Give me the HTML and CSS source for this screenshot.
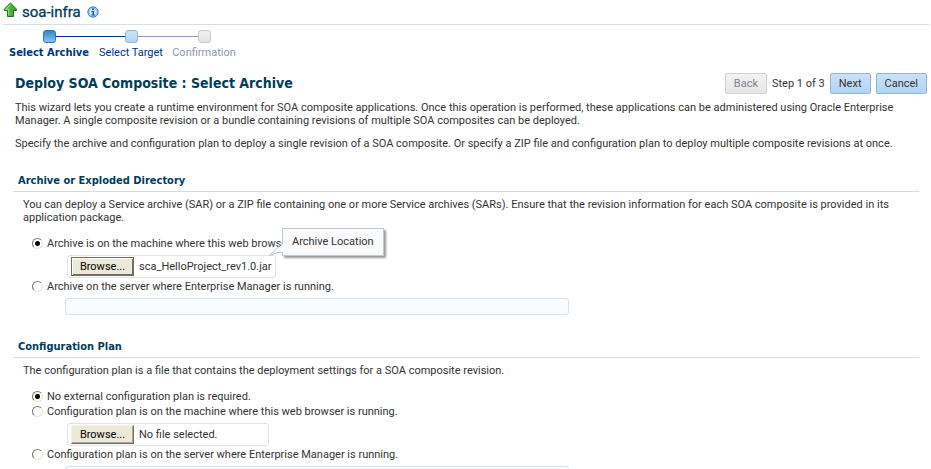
FILE: index.html
```
<!DOCTYPE html>
<html lang="en">
<head>
    <meta charset="UTF-8">
    <meta name="viewport" content="width=device-width, initial-scale=1.0">
    <title>Deploy SOA Composite</title>
    <link rel="stylesheet" href="styles.css">
</head>
<body>

<header class="target-header">
    <svg class="up-icon" width="14" height="16" viewBox="0 0 14 16" aria-hidden="true">
        <defs>
            <linearGradient id="up-fill" x1="0" y1="0" x2="1" y2="0">
                <stop offset="0" stop-color="#6fd455"/>
                <stop offset="1" stop-color="#2c9a25"/>
            </linearGradient>
        </defs>
        <path d="M7.5 1 L13.4 7 V8.5 H10.5 V14.5 H4.5 V8.5 H1.3 V7 Z" fill="url(#up-fill)" stroke="#1d761b" stroke-linejoin="round"/>
        <path d="M7.5 2.6 L3 7.3 H5.7 V13" fill="none" stroke="#a5e893" stroke-width="0.8"/>
    </svg>
    <span class="target-name">soa-infra</span>
    <svg class="info-icon" width="12" height="12" viewBox="0 0 12 12" aria-hidden="true">
        <circle cx="6" cy="6" r="5.2" fill="#8fc0f2" stroke="#3f7fd0"/>
        <circle cx="6" cy="6" r="3.6" fill="#cfe4fb"/>
        <path d="M5 2.5h2v1.5H5z M4.5 5H7v3.5h1v1H4.5v-1h1V6h-1z" fill="#1657b0"/>
    </svg>
</header>

<nav>
    <ol class="train">
        <li class="stop current"><span class="track"><span class="marker"></span></span>Select Archive</li>
        <li class="stop next"><span class="track"><span class="marker"></span></span>Select Target</li>
        <li class="stop last"><span class="track"><span class="marker"></span></span>Confirmation</li>
    </ol>
</nav>

<main>
    <div class="title-row">
        <h1>Deploy SOA Composite : Select Archive</h1>
        <div class="actions">
            <button type="button" disabled>Back</button>
            <span class="step-count">Step 1 of 3</span>
            <button type="button">Next</button>
            <button type="button">Cancel</button>
        </div>
    </div>

    <div class="intro">
        <p>This wizard lets you create a runtime environment for SOA composite applications. Once this operation is performed, these applications can be administered using Oracle Enterprise Manager. A single composite revision or a bundle containing revisions of multiple SOA composites can be deployed.</p>
        <p>Specify the archive and configuration plan to deploy a single revision of a SOA composite. Or specify a ZIP file and configuration plan to deploy multiple composite revisions at once.</p>
    </div>

    <section>
        <h2>Archive or Exploded Directory</h2>
        <p class="hint">You can deploy a Service archive (SAR) or a ZIP file containing one or more Service archives (SARs). Ensure that the revision information for each SOA composite is provided in its application package.</p>
        <div class="options">
            <div class="option">
                <input type="radio" name="archive" id="archive-local" checked>
                <label for="archive-local">Archive is on the machine where this web browser is running.</label>
            </div>
            <div class="file-box">
                <button type="button" class="browse focused">Browse...</button>
                <span>sca_HelloProject_rev1.0.jar</span>
                <div class="tooltip" role="tooltip">
                    Archive Location
                    <svg class="tip" width="16" height="15" viewBox="0 0 16 15" aria-hidden="true">
                        <path d="M16 1 L1 14 L9 10.5 H16 Z" fill="#fafafa"/>
                        <path d="M14.5 1 L1 14 L9 10.5 H14.5" fill="none" stroke="#b9c9dc"/>
                    </svg>
                </div>
            </div>
            <div class="option">
                <input type="radio" name="archive" id="archive-server">
                <label for="archive-server">Archive on the server where Enterprise Manager is running.</label>
            </div>
            <input type="text" class="path" aria-label="Archive path on server" disabled>
        </div>
    </section>

    <section>
        <h2>Configuration Plan</h2>
        <p class="hint">The configuration plan is a file that contains the deployment settings for a SOA composite revision.</p>
        <div class="options">
            <div class="option">
                <input type="radio" name="plan" id="plan-none" checked>
                <label for="plan-none">No external configuration plan is required.</label>
            </div>
            <div class="option">
                <input type="radio" name="plan" id="plan-local">
                <label for="plan-local">Configuration plan is on the machine where this web browser is running.</label>
            </div>
            <div class="file-box empty">
                <button type="button" class="browse">Browse...</button>
                <span>No file selected.</span>
            </div>
            <div class="option">
                <input type="radio" name="plan" id="plan-server">
                <label for="plan-server">Configuration plan is on the server where Enterprise Manager is running.</label>
            </div>
            <input type="text" class="path" aria-label="Configuration plan path on server" disabled>
        </div>
    </section>
</main>

</body>
</html>
```
FILE: styles.css
```
* {
    box-sizing: border-box;
}
body {
    margin: 0;
    background: #fff;
    color: #333;
    font-family: Tahoma, Roboto, sans-serif;
    font-size: 11px;
    line-height: 13px;
}
/* the last path field may run under the fold */
html {
    scrollbar-width: none;
}
h1, h2, p, ol {
    margin: 0;
    padding: 0;
}
h1, h2, .current {
    font-family: Tahoma, "DejaVu Sans Condensed", "DejaVu Sans", sans-serif;
}
button, input {
    font: inherit;
    margin: 0;
}
.target-header {
    display: flex;
    align-items: center;
    height: 25px;
    margin: 0 2px 0 3px;
    border-bottom: 1px solid #d6dfe6;
}
.up-icon {
    margin-bottom: 5px;
}
.target-name {
    margin: 0 6px 0 5px;
    font-size: 15px;
    line-height: 20px;
    color: #003d5b;
    -webkit-text-stroke: 0.3px #003d5b;
}
.train {
    display: flex;
    padding: 5px 0 0 4px;
    list-style: none;
}
.stop {
    width: 72px;
    text-align: center;
    color: #003286;
}
.track {
    display: flex;
    align-items: center;
    margin-bottom: 3px;
}
.track::before, .track::after {
    content: "";
    flex: 1;
    height: 1px;
    background: #003286;
}
.current {
    width: 90px;
    font-weight: bold;
}
.next {
    width: 74px;
}
.current .track::before, .last .track::after {
    background: none;
}
.next .track::after, .last .track::before {
    background: #8c97b5;
}
.marker {
    width: 13px;
    height: 13px;
    border: 1px solid #2f76b3;
    border-radius: 3px;
    background: linear-gradient(#2f86c9, #8fc0e8);
}
.next .marker {
    border-color: #8fb6da;
    background: linear-gradient(#cde2f7, #b4d5f5);
}
.last {
    color: #8c97b5;
}
.last .marker {
    border-color: #c8c8c8;
    background: linear-gradient(#f2f2f2, #e2e2e2);
}
.title-row {
    display: flex;
    justify-content: space-between;
    align-items: center;
    margin: 14px 4px 0 15px;
}
h1 {
    font-size: 14px;
    line-height: 21px;
    color: #003d5b;
}
.actions {
    display: flex;
    align-items: center;
    gap: 5px;
}
.actions button {
    height: 21px;
    padding: 0 8px;
    border: 1px solid #90b5d9;
    border-radius: 2px;
    background: linear-gradient(#cbe1f7, #b2d4f5);
    color: #333;
}
.actions button:disabled {
    border-color: #d2d2d2;
    background: linear-gradient(#f2f2f2, #e6e6e6);
    color: #7b8190;
}
.intro {
    display: grid;
    gap: 10px;
    margin: 7px 20px 0 15px;
}
section {
    margin: 23px 12px 24px 13px;
}
h2 {
    padding: 0 5px 3px;
    border-bottom: 1px solid #d2dde8;
    font-size: 11px;
    line-height: 15px;
    color: #003d5b;
}
.hint {
    padding: 6px 10px 0;
}
.options {
    padding: 12px 0 0 19px;
}
.option {
    display: flex;
    align-items: center;
    gap: 4px;
    height: 15px;
}
.option input {
    appearance: none;
    width: 11px;
    height: 11px;
    border: 1px solid;
    border-color: #77746a #e8e5d8 #e8e5d8 #77746a;
    border-radius: 50%;
    background: #fff;
}
.option input:checked {
    background: radial-gradient(circle, #000 0 2px, #fff 3px);
}
.file-box {
    position: relative;
    display: flex;
    align-items: center;
    gap: 5px;
    width: fit-content;
    height: 23px;
    margin: 4px 0 1px 35px;
    padding: 0 3px;
    border: 1px solid #dfe4e8;
    border-radius: 3px;
}
.empty {
    min-width: 202px;
}
.browse {
    width: 63px;
    height: 19px;
    padding: 0;
    border: 1px solid;
    border-color: #f6f4ea #716f64 #716f64 #f6f4ea;
    background: #ece9d8;
    box-shadow: inset -1px -1px #aca899;
    color: #000;
}
.focused {
    border-color: #716f64;
    box-shadow: inset 1px 1px #fff, inset -1px -1px #716f64;
}
.path {
    display: block;
    width: 504px;
    max-width: 100%;
    height: 17px;
    margin: 4px 0 0 33px;
    border: 1px solid #d9e1e8;
    border-radius: 3px;
    background: #f8fcff;
}
/* callout over the first file field */
.tooltip {
    position: absolute;
    left: 214px;
    bottom: 21px;
    padding: 6px 9px 7px;
    border: 1px solid #b9c9dc;
    background: #fafafa;
    box-shadow: 2px 2px 2px #999;
    white-space: nowrap;
}
.tip {
    position: absolute;
    right: 100%;
    bottom: -2px;
    margin-right: -1px;
}
```
